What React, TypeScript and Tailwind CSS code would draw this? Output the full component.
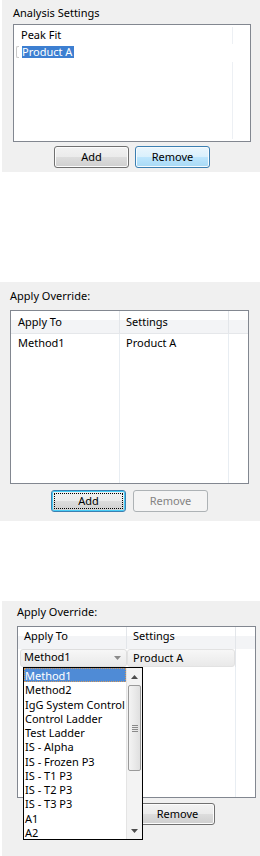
import React from 'react';

type BtnKind = 'normal' | 'hover' | 'focus' | 'disabled';

const btnStyles: Record<BtnKind, string> = {
  normal:
    'border-[#707070] bg-[linear-gradient(#f2f2f2_0%,#ebebeb_50%,#dddddd_50%,#cfcfcf_100%)] shadow-[inset_0_0_0_1px_#fcfcfc] text-black',
  hover:
    'border-[#3c7fb1] bg-[linear-gradient(#eaf6fd_0%,#d9f0fc_50%,#bee6fd_50%,#a7d9f5_100%)] shadow-[inset_0_0_0_1px_#f6fbfe] text-black',
  focus:
    'border-[#3c7fb1] bg-[linear-gradient(#f2f2f2_0%,#ebebeb_50%,#dddddd_50%,#cfcfcf_100%)] shadow-[inset_0_0_0_1px_#48cdf6] text-black outline outline-dotted outline-black outline-offset-[-4px]',
  disabled: 'border-[#adb2b5] bg-[#f4f4f4] text-[#838383]',
};

function Btn({ label, kind = 'normal' }: { label: string; kind?: BtnKind }) {
  return (
    <div
      className={`w-[75px] h-[22px] rounded-[3px] border flex items-center justify-center leading-[16px] ${btnStyles[kind]}`}
    >
      {label}
    </div>
  );
}

function ArrowDown({ color = '#6f6f6f' }: { color?: string }) {
  return (
    <svg width="7" height="4" viewBox="0 0 7 4">
      <polygon points="0,0 7,0 3.5,4" fill={color} />
    </svg>
  );
}

function ArrowUp({ color = '#4d4d4d' }: { color?: string }) {
  return (
    <svg width="7" height="4" viewBox="0 0 7 4">
      <polygon points="0,4 7,4 3.5,0" fill={color} />
    </svg>
  );
}

const dropItems = [
  'Method1',
  'Method2',
  'IgG System Control',
  'Control Ladder',
  'Test Ladder',
  'IS - Alpha',
  'IS - Frozen P3',
  'IS - T1 P3',
  'IS - T2 P3',
  'IS - T3 P3',
  'A1',
  'A2',
];

export default function App() {
  return (
    <div className="w-[260px] min-h-[856px] bg-white font-['Noto_Sans',sans-serif] text-[11px] text-black">
      {/* Analysis settings */}
      <div className="ml-[2px] h-[172px] bg-[#f0f0f0] pt-[5px] pl-[11px]">
        <div className="h-[16px] leading-[16px]">Analysis Settings</div>
        <div className="mt-[3px] w-[238px] h-[118px] border border-[#828790] bg-white flex">
          <div className="flex-1 pt-[2px]">
            <div className="h-[17px] leading-[16px] pl-[7px]">Peak Fit</div>
            <div className="h-[17px] flex items-start pt-[2px]">
              <div className="ml-[2px] w-[3px] h-[12px] rounded-l-[2px] border-l border-y border-[#c9c9c9]" />
              <span className="ml-[3px] h-[12px] leading-[12px] bg-[#3d7fd1] text-white pr-[2px]">
                Product A
              </span>
            </div>
          </div>
          <div className="w-px flex flex-col pt-[2px] pb-[2px]">
            <div className="h-[17px] bg-[#edf0f4]" />
            <div className="h-[18px]" />
            <div className="flex-1 bg-[#edf0f4]" />
          </div>
          <div className="w-[17px]" />
        </div>
        <div className="mt-[4px] w-[238px] flex justify-center gap-[6px]">
          <Btn label="Add" />
          <Btn label="Remove" kind="hover" />
        </div>
      </div>

      {/* Apply override */}
      <div className="mt-[110px] h-[239px] bg-[#f0f0f0] pt-[6px] pl-[10px]">
        <div className="h-[16px] leading-[16px]">Apply Override:</div>
        <div className="mt-[6px] w-[239px] h-[174px] border border-[#828790] bg-white flex flex-col">
          <div className="flex h-[23px] border-b border-[#e5e7ea] bg-[linear-gradient(#ffffff_0%,#ffffff_40%,#f3f4f6_40%,#f3f4f6_100%)]">
            <div className="w-[108px] pl-[7px] pt-[3px] leading-[16px]">Apply To</div>
            <div className="w-px bg-[#e3e6ea]" />
            <div className="w-[108px] pl-[6px] pt-[3px] leading-[16px]">Settings</div>
            <div className="w-px bg-[#e3e6ea]" />
            <div className="flex-1" />
          </div>
          <div className="flex flex-1">
            <div className="w-[108px] pl-[7px] pt-px leading-[16px]">Method1</div>
            <div className="w-px bg-[#e8edf2]" />
            <div className="w-[108px] pl-[6px] pt-px leading-[16px]">Product A</div>
            <div className="w-px bg-[#e8edf2]" />
            <div className="flex-1" />
          </div>
        </div>
        <div className="mt-[6px] w-[239px] flex justify-center gap-[7px]">
          <Btn label="Add" kind="focus" />
          <Btn label="Remove" kind="disabled" />
        </div>
      </div>

      {/* Apply override, editing with dropdown open */}
      <div className="relative mt-[80px] ml-[2px] h-[255px] bg-[#f0f0f0] pt-[3px] pl-[15px]">
        <div className="h-[16px] leading-[16px]">Apply Override:</div>
        <div className="mt-[6px] w-[239px] h-[172px] border border-[#828790] bg-white flex flex-col">
          <div className="flex h-[22px] bg-[linear-gradient(#ffffff_0%,#ffffff_40%,#f3f4f6_40%,#f3f4f6_100%)]">
            <div className="w-[108px] pl-[6px] pt-px leading-[16px]">Apply To</div>
            <div className="w-px bg-[#e3e6ea]" />
            <div className="w-[108px] pl-[6px] pt-px leading-[16px]">Settings</div>
            <div className="w-px bg-[#e3e6ea]" />
            <div className="flex-1" />
          </div>
          <div className="flex h-[18px]">
            <div className="ml-[2px] w-[107px] h-[18px] rounded-[3px] border border-[#dedede] bg-[linear-gradient(#f7f7f7,#e9e9e9)] flex items-start">
              <div className="flex-1 pl-[3px] leading-[13px]">Method1</div>
              <div className="self-center mr-[5px] flex">
                <ArrowDown color="#8a8a8a" />
              </div>
            </div>
            <div className="w-[108px] h-[18px] rounded-[3px] border border-[#e2e2e2] bg-[linear-gradient(#f7f7f7,#e9e9e9)] pl-[5px] pt-px leading-[13px]">
              Product A
            </div>
            <div className="w-px bg-[#e3e6ea]" />
            <div className="flex-1" />
          </div>
          <div className="flex flex-1">
            <div className="w-[108px]" />
            <div className="w-px bg-[#e8edf2]" />
            <div className="w-[108px]" />
            <div className="w-px bg-[#e8edf2]" />
            <div className="flex-1" />
          </div>
        </div>
        <div className="mt-[5px] w-[239px] flex justify-center gap-[7px]">
          <Btn label="Add" />
          <Btn label="Remove" />
        </div>

        {/* open dropdown list */}
        <div className="absolute left-[21px] top-[66px] w-[120px] h-[173px] border border-black bg-white flex">
          <div className="flex-1">
            {dropItems.map((item, i) => (
              <div
                key={item}
                className={
                  i === 0
                    ? 'h-[14.25px] leading-[16px] pl-px bg-[#4f8bd6] text-white outline outline-dotted outline-[#d69a5a] outline-offset-[-1px] whitespace-nowrap'
                    : 'h-[14.25px] leading-[16px] pl-px whitespace-nowrap'
                }
              >
                {item}
              </div>
            ))}
          </div>
          <div className="w-[16px] flex flex-col bg-[#f3f3f3] border-l border-[#e4e4e4]">
            <div className="h-[17px] flex items-center justify-center">
              <ArrowUp />
            </div>
            <div className="h-[86px] mx-px rounded-[2px] border border-[#9a9a9a] bg-[linear-gradient(90deg,#f4f4f4,#e0e0e0)] flex flex-col items-center justify-center gap-[1px]">
              <div className="w-[6px] h-px bg-[#8a8a8a]" />
              <div className="w-[6px] h-px bg-[#8a8a8a]" />
              <div className="w-[6px] h-px bg-[#8a8a8a]" />
              <div className="w-[6px] h-px bg-[#8a8a8a]" />
            </div>
            <div className="flex-1" />
            <div className="h-[17px] flex items-center justify-center">
              <ArrowDown color="#4d4d4d" />
            </div>
          </div>
        </div>
      </div>
    </div>
  );
}
